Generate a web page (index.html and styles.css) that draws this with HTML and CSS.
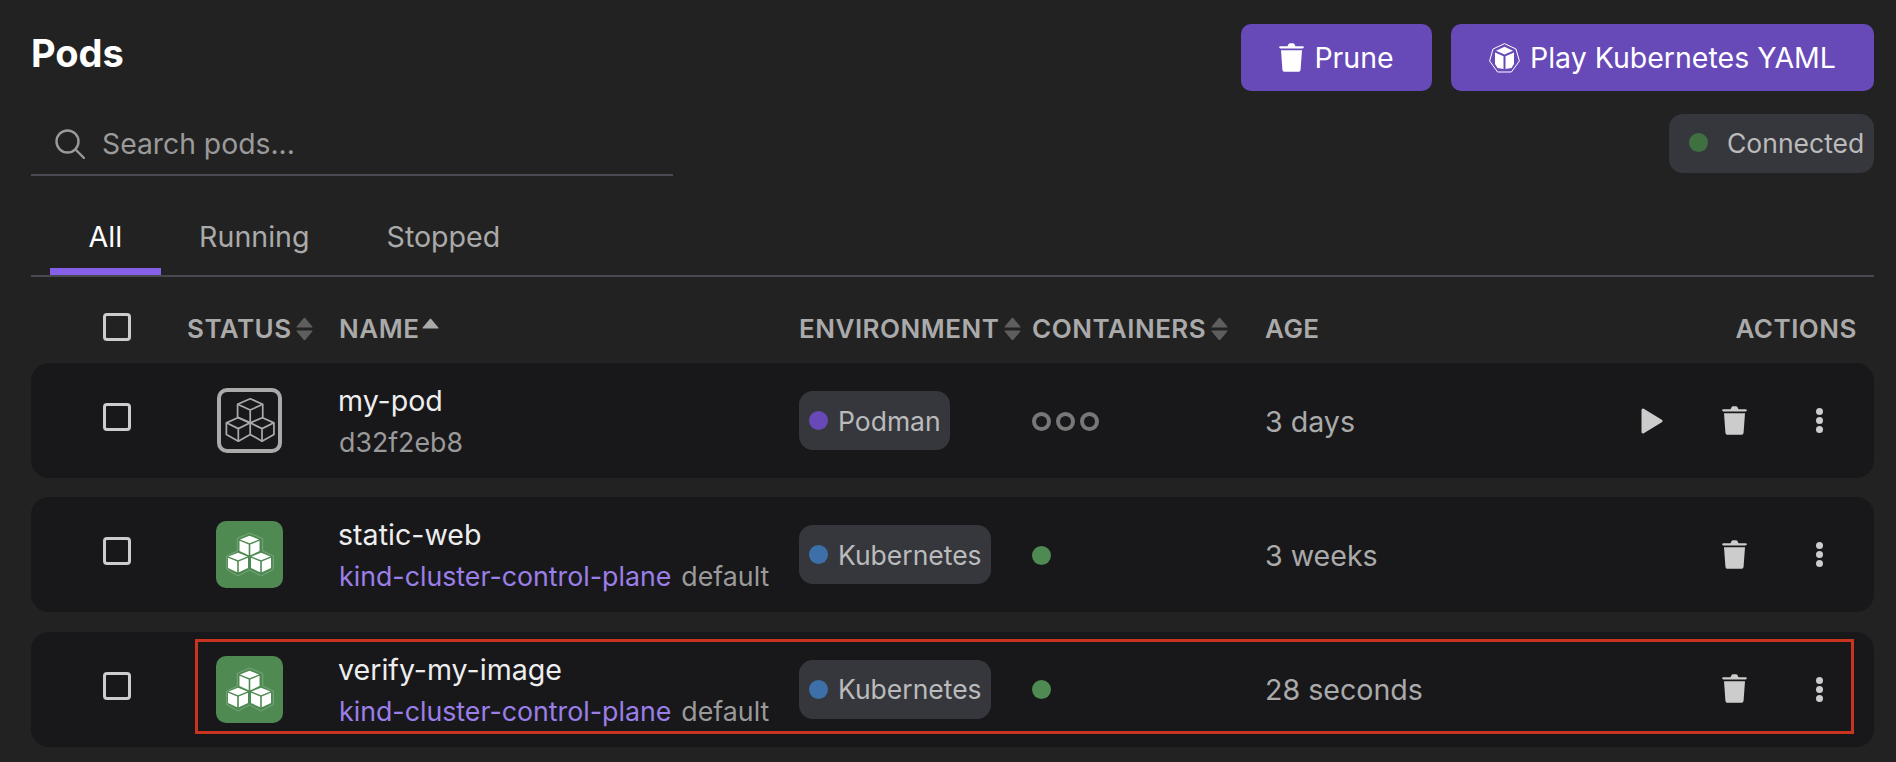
FILE: index.html
```html
<!DOCTYPE html>
<html lang="en">
<head>
  <meta charset="UTF-8">
  <title>Pods</title>
  <link rel="stylesheet" href="styles.css">
</head>
<body>

<svg class="icon-defs">
  <symbol id="trash" viewBox="0 0 25 29">
    <path d="M8.500 3.200 9.500 1.200C9.800.5 10.300.2 11 .2h3c.7 0 1.200.3 1.500 1l1 2h7c.8 0 1.300.5 1.300 1.100S24.300 5.500 23.500 5.500h-22C.7 5.500.2 5 .2 4.300S.7 3.200 1.500 3.200Z"/>
    <path d="M2 7.200h21l-1.400 19.300c-.1 1.400-1 2.300-2.400 2.300H5.800c-1.400 0-2.300-.9-2.400-2.300Z"/>
  </symbol>
  <symbol id="sort" viewBox="0 0 17 24">
    <path d="M7.600 1.200c.5-.6 1.300-.6 1.800 0l6.900 8.300c.4.500.1 1.100-.5 1.100H1.200c-.6 0-.9-.6-.5-1.100Z"/>
    <path d="M7.600 22.800c.5.600 1.300.6 1.800 0l6.900-8.300c.4-.5.1-1.100-.5-1.100H1.200c-.6 0-.9.6-.5 1.100Z"/>
  </symbol>
  <symbol id="pod-outline" viewBox="4 4 56 56">
    <g fill="none" stroke="currentColor" stroke-width="1.700" stroke-linejoin="round">
      <path d="M32.700 10.700 45 16v13l-12.300 5.300L20.300 29V16Z"/>
      <path d="M20.300 16l12.400 5.700L45 16M32.700 21.700v12.600"/>
      <path d="M21 29 9.300 34.300v11.400L21 52.300l11.700-6.600V34.300Z"/>
      <path d="M9.300 34.300 21 40l11.700-5.700M21 40v12.300"/>
      <path d="M44.300 29 56 34.300v11.400l-11.700 6.600-11.600-6.600"/>
      <path d="M32.700 34.300 44.300 40 56 34.300M44.300 40v12.300"/>
    </g>
  </symbol>
  <symbol id="cube" viewBox="-12 -12 24 24">
    <path d="M0-9.800 9.500-6 0-2.200-9.500-6Z"/>
    <path d="M-10-4.800-.8-1V9.800L-10 5.500Z"/>
    <path d="M10-4.800.8-1V9.800L10 5.500Z"/>
  </symbol>
  <symbol id="pod-filled" viewBox="0 0 67 67">
    <path d="M33.500 12 46.700 17.500V30l10.600 5v13.500L45 55l-11.500-6L22 55 10.700 48.500V35l10.600-5V17.500Z" fill="none" stroke="#fff" stroke-opacity=".4" stroke-width=".6"/>
    <use href="#cube" x="21.500" y="12.500" width="24" height="24"/>
    <use href="#cube" x="10" y="29.500" width="24" height="24"/>
    <use href="#cube" x="33" y="29.500" width="24" height="24"/>
  </symbol>
</svg>

<div class="page">
  <div class="top-bar">
    <div class="top-left">
      <h1 class="page-title">Pods</h1>
      <div class="search">
        <svg class="search-icon" viewBox="0 0 30 30" fill="none" stroke="currentColor" stroke-width="2.400" stroke-linecap="round"><circle cx="12.500" cy="12.500" r="11"/><path d="M20.500 20.500 29 29"/></svg>
        <span>Search pods...</span>
      </div>
    </div>
    <div class="top-right">
      <div class="top-buttons">
        <button class="btn btn-prune"><svg class="btn-trash"><use href="#trash"/></svg>Prune</button>
        <button class="btn btn-play">
          <svg class="btn-cube" viewBox="0 0 31 30">
            <path d="M15.500.6 27 6l3.400 12-8 11H8.600l-8-11L4 6Z" fill="none" stroke="#fff" stroke-width="1"/>
            <path d="M15.500 3.800 24 7.800l-8.500 3.800L7 7.800Z" fill="#fff"/>
            <path d="M6 9.500l8.500 3.800V26l-6-1-2.500-4Z" fill="#fff"/>
            <path d="M25 9.500l-8.500 3.800V26l6-1 2.500-4Z" fill="#fff"/>
          </svg>
          Play Kubernetes YAML
        </button>
      </div>
      <div class="connection"><span class="dot dot-connected"></span>Connected</div>
    </div>
  </div>

  <div class="tabs">
    <div class="tab active">All</div>
    <div class="tab">Running</div>
    <div class="tab">Stopped</div>
  </div>

  <div class="grid table-head">
    <div class="check-cell"><span class="checkbox"></span></div>
    <div class="th th-status">STATUS<svg class="sort"><use href="#sort"/></svg></div>
    <div class="th">NAME<svg class="sort-up" viewBox="0 0 17 11"><path d="M7.600 1.200c.5-.6 1.300-.6 1.800 0l6.900 8.300c.4.500.1 1.100-.5 1.100H1.200c-.6 0-.9-.6-.5-1.100Z"/></svg></div>
    <div class="th">ENVIRONMENT<svg class="sort"><use href="#sort"/></svg></div>
    <div class="th">CONTAINERS<svg class="sort"><use href="#sort"/></svg></div>
    <div class="th">AGE</div>
    <div class="th th-actions">ACTIONS</div>
  </div>

  <div class="rows">
    <div class="grid row">
      <div class="check-cell"><span class="checkbox"></span></div>
      <div class="status-cell"><div class="pod-icon pod-stopped"><svg><use href="#pod-outline"/></svg></div></div>
      <div class="name-cell">
        <div class="pod-name">my-pod</div>
        <div class="pod-sub"><span class="pod-id">d32f2eb8</span></div>
      </div>
      <div><span class="env-chip"><span class="dot dot-podman"></span>Podman</span></div>
      <div class="containers"><span class="ring"></span><span class="ring"></span><span class="ring"></span></div>
      <div class="age">3 days</div>
      <div class="actions">
        <svg class="act-play" viewBox="0 0 22 26"><path d="M2 2 20 13 2 24Z" stroke="currentColor" stroke-width="3" stroke-linejoin="round"/></svg>
        <svg class="act-trash"><use href="#trash"/></svg>
        <span class="kebab"><i></i><i></i><i></i></span>
      </div>
    </div>

    <div class="grid row">
      <div class="check-cell"><span class="checkbox"></span></div>
      <div class="status-cell"><div class="pod-icon pod-running"><svg><use href="#pod-filled"/></svg></div></div>
      <div class="name-cell">
        <div class="pod-name">static-web</div>
        <div class="pod-sub"><span class="pod-node">kind-cluster-control-plane</span><span class="pod-id">default</span></div>
      </div>
      <div><span class="env-chip"><span class="dot dot-k8s"></span>Kubernetes</span></div>
      <div class="containers"><span class="dot dot-running"></span></div>
      <div class="age">3 weeks</div>
      <div class="actions">
        <svg class="act-trash"><use href="#trash"/></svg>
        <span class="kebab"><i></i><i></i><i></i></span>
      </div>
    </div>

    <div class="grid row row-marked">
      <div class="check-cell"><span class="checkbox"></span></div>
      <div class="status-cell"><div class="pod-icon pod-running"><svg><use href="#pod-filled"/></svg></div></div>
      <div class="name-cell">
        <div class="pod-name">verify-my-image</div>
        <div class="pod-sub"><span class="pod-node">kind-cluster-control-plane</span><span class="pod-id">default</span></div>
      </div>
      <div><span class="env-chip"><span class="dot dot-k8s"></span>Kubernetes</span></div>
      <div class="containers"><span class="dot dot-running"></span></div>
      <div class="age">28 seconds</div>
      <div class="actions">
        <svg class="act-trash"><use href="#trash"/></svg>
        <span class="kebab"><i></i><i></i><i></i></span>
      </div>
      <div class="highlight-box"></div>
    </div>
  </div>
</div>

</body>
</html>
```

FILE: styles.css
```css
* {
  box-sizing: border-box;
}

html, body {
  height: 100%;
}

body {
  margin: 0;
  background: #222222;
  font-family: Inter, "Liberation Sans", sans-serif;
  color: #eeeeee;
  overflow: hidden;
}

.icon-defs {
  display: none;
}

.page {
  padding: 0 22px 0 31px;
}

.top-bar {
  display: flex;
  justify-content: space-between;
  padding-top: 24px;
}

.top-left {
  width: 642px;
}

.page-title {
  margin: 0 0 31px;
  height: 58px;
  line-height: 58px;
  font-size: 38px;
  font-weight: 700;
  color: #ffffff;
}

.search {
  display: flex;
  align-items: center;
  gap: 17px;
  height: 63px;
  padding-left: 24px;
  border-bottom: 2px solid #4a4a52;
  font-size: 28.300px;
  color: #9a9a9a;
}

.search-icon {
  width: 30px;
  height: 30px;
}

.top-right {
  display: flex;
  flex-direction: column;
  align-items: flex-end;
}

.top-buttons {
  display: flex;
  gap: 19px;
}

.btn {
  display: flex;
  align-items: center;
  justify-content: center;
  height: 67px;
  border: none;
  border-radius: 10px;
  background: #6749b8;
  color: #ffffff;
  font-family: inherit;
  font-size: 28.500px;
  font-weight: 400;
}

.btn-prune {
  width: 191px;
  gap: 10px;
}

.btn-play {
  width: 423px;
  gap: 10px;
}

.btn-trash {
  width: 25px;
  height: 29px;
  fill: #ffffff;
}

.btn-cube {
  width: 31px;
  height: 30px;
}

.connection {
  display: flex;
  align-items: center;
  gap: 19px;
  width: 205px;
  height: 59px;
  margin-top: 23px;
  padding-left: 20px;
  padding-bottom: 2px;
  border-radius: 14px;
  background: #36373d;
  font-size: 26.500px;
  color: #bbbbbb;
  white-space: nowrap;
}

.dot {
  flex: none;
  display: inline-block;
  width: 19px;
  height: 19px;
  border-radius: 50%;
}

.dot-connected {
  background: #3f7042;
}

.dot-podman {
  background: #6749b8;
}

.dot-k8s {
  background: #3d6fa8;
}

.dot-running {
  background: #4f8a52;
}

.tabs {
  display: flex;
  height: 101px;
  padding-left: 19px;
  border-bottom: 2px solid #48484e;
}

.tab {
  height: 99px;
  padding: 41px 38.500px 0;
  line-height: 40px;
  font-size: 28.600px;
  color: #aaaaaa;
  border-bottom: 7px solid transparent;
}

.tab.active {
  color: #ffffff;
  border-bottom-color: #8661e8;
}

/* shared columns for the head and the rows */
.grid {
  display: grid;
  grid-template-columns: 157px 151px 460px 233px 233px 334px 275px;
  align-items: center;
}

.table-head {
  height: 86px;
  padding-top: 13px;
}

.th {
  display: flex;
  align-items: center;
  gap: 5px;
  padding-top: 4px;
  font-size: 26px;
  font-weight: 600;
  letter-spacing: 0.5px;
  color: #aaaaaa;
}

.th-status {
  margin-left: -1px;
  gap: 4px;
}

.th-actions {
  justify-content: flex-end;
  padding-right: 17px;
}

.sort {
  flex: none;
  width: 17px;
  height: 24px;
  fill: #5e5e5e;
}

.sort-up {
  flex: none;
  width: 17px;
  height: 11px;
  margin-bottom: 10px;
  margin-left: -2px;
  fill: #aaaaaa;
}

.check-cell {
  padding-left: 72px;
  display: flex;
}

.checkbox {
  display: block;
  width: 28px;
  height: 28px;
  border: 3px solid #cccccc;
  border-radius: 4px;
}

.rows {
  display: flex;
  flex-direction: column;
  gap: 19.400px;
}

.row {
  position: relative;
  height: 115px;
  border-radius: 18px;
  background: #18181b;
}

.row .check-cell {
  margin-bottom: 7px;
}

.status-cell {
  padding-left: 28px;
}

.pod-icon {
  width: 67px;
  height: 67px;
  border-radius: 10px;
}

.pod-icon svg {
  display: block;
  width: 100%;
  height: 100%;
}

.pod-stopped {
  width: 65px;
  height: 65px;
  margin-left: 1px;
  border: 4px solid #aaaaaa;
  color: #aaaaaa;
}

.pod-running {
  background: #4f8a52;
  fill: #ffffff;
}

.name-cell {
  display: flex;
  flex-direction: column;
  padding-top: 1px;
}

.pod-name {
  margin-left: -1px;
  padding-top: 1px;
  line-height: 41px;
  font-size: 28.600px;
  color: #eeeeee;
}

.pod-sub {
  display: flex;
  gap: 10px;
  line-height: 42px;
  font-size: 26.750px;
}

.pod-node {
  color: #9b7fe8;
}

.pod-id {
  color: #9a9a9a;
}

.env-chip {
  display: inline-flex;
  align-items: center;
  gap: 10px;
  height: 59px;
  padding: 0 9px 0 10px;
  border-radius: 14px;
  background: #36373d;
  font-size: 26.500px;
  color: #bbbbbb;
}

.containers {
  display: flex;
  gap: 5px;
  padding-top: 1px;
}

.ring {
  width: 19px;
  height: 19px;
  border: 4px solid #777777;
  border-radius: 50%;
}

.age {
  padding-top: 1px;
  font-size: 28.600px;
  color: #aaaaaa;
}

.actions {
  display: flex;
  align-items: center;
  justify-content: flex-end;
  gap: 60px;
  padding-right: 51px;
  color: #cccccc;
}

.act-play {
  width: 22px;
  height: 26px;
  margin-right: -1px;
  fill: currentColor;
}

.act-trash {
  width: 25px;
  height: 29px;
  margin-bottom: 1px;
  fill: #cccccc;
}

.kebab {
  display: flex;
  flex-direction: column;
  gap: 2px;
  margin-left: 9px;
}

.kebab i {
  display: block;
  width: 7px;
  height: 7px;
  border-radius: 50%;
  background: #cccccc;
}

.highlight-box {
  position: absolute;
  left: 164px;
  right: 20px;
  top: 7px;
  bottom: 13px;
  border: 3px solid #c8341f;
}
```
